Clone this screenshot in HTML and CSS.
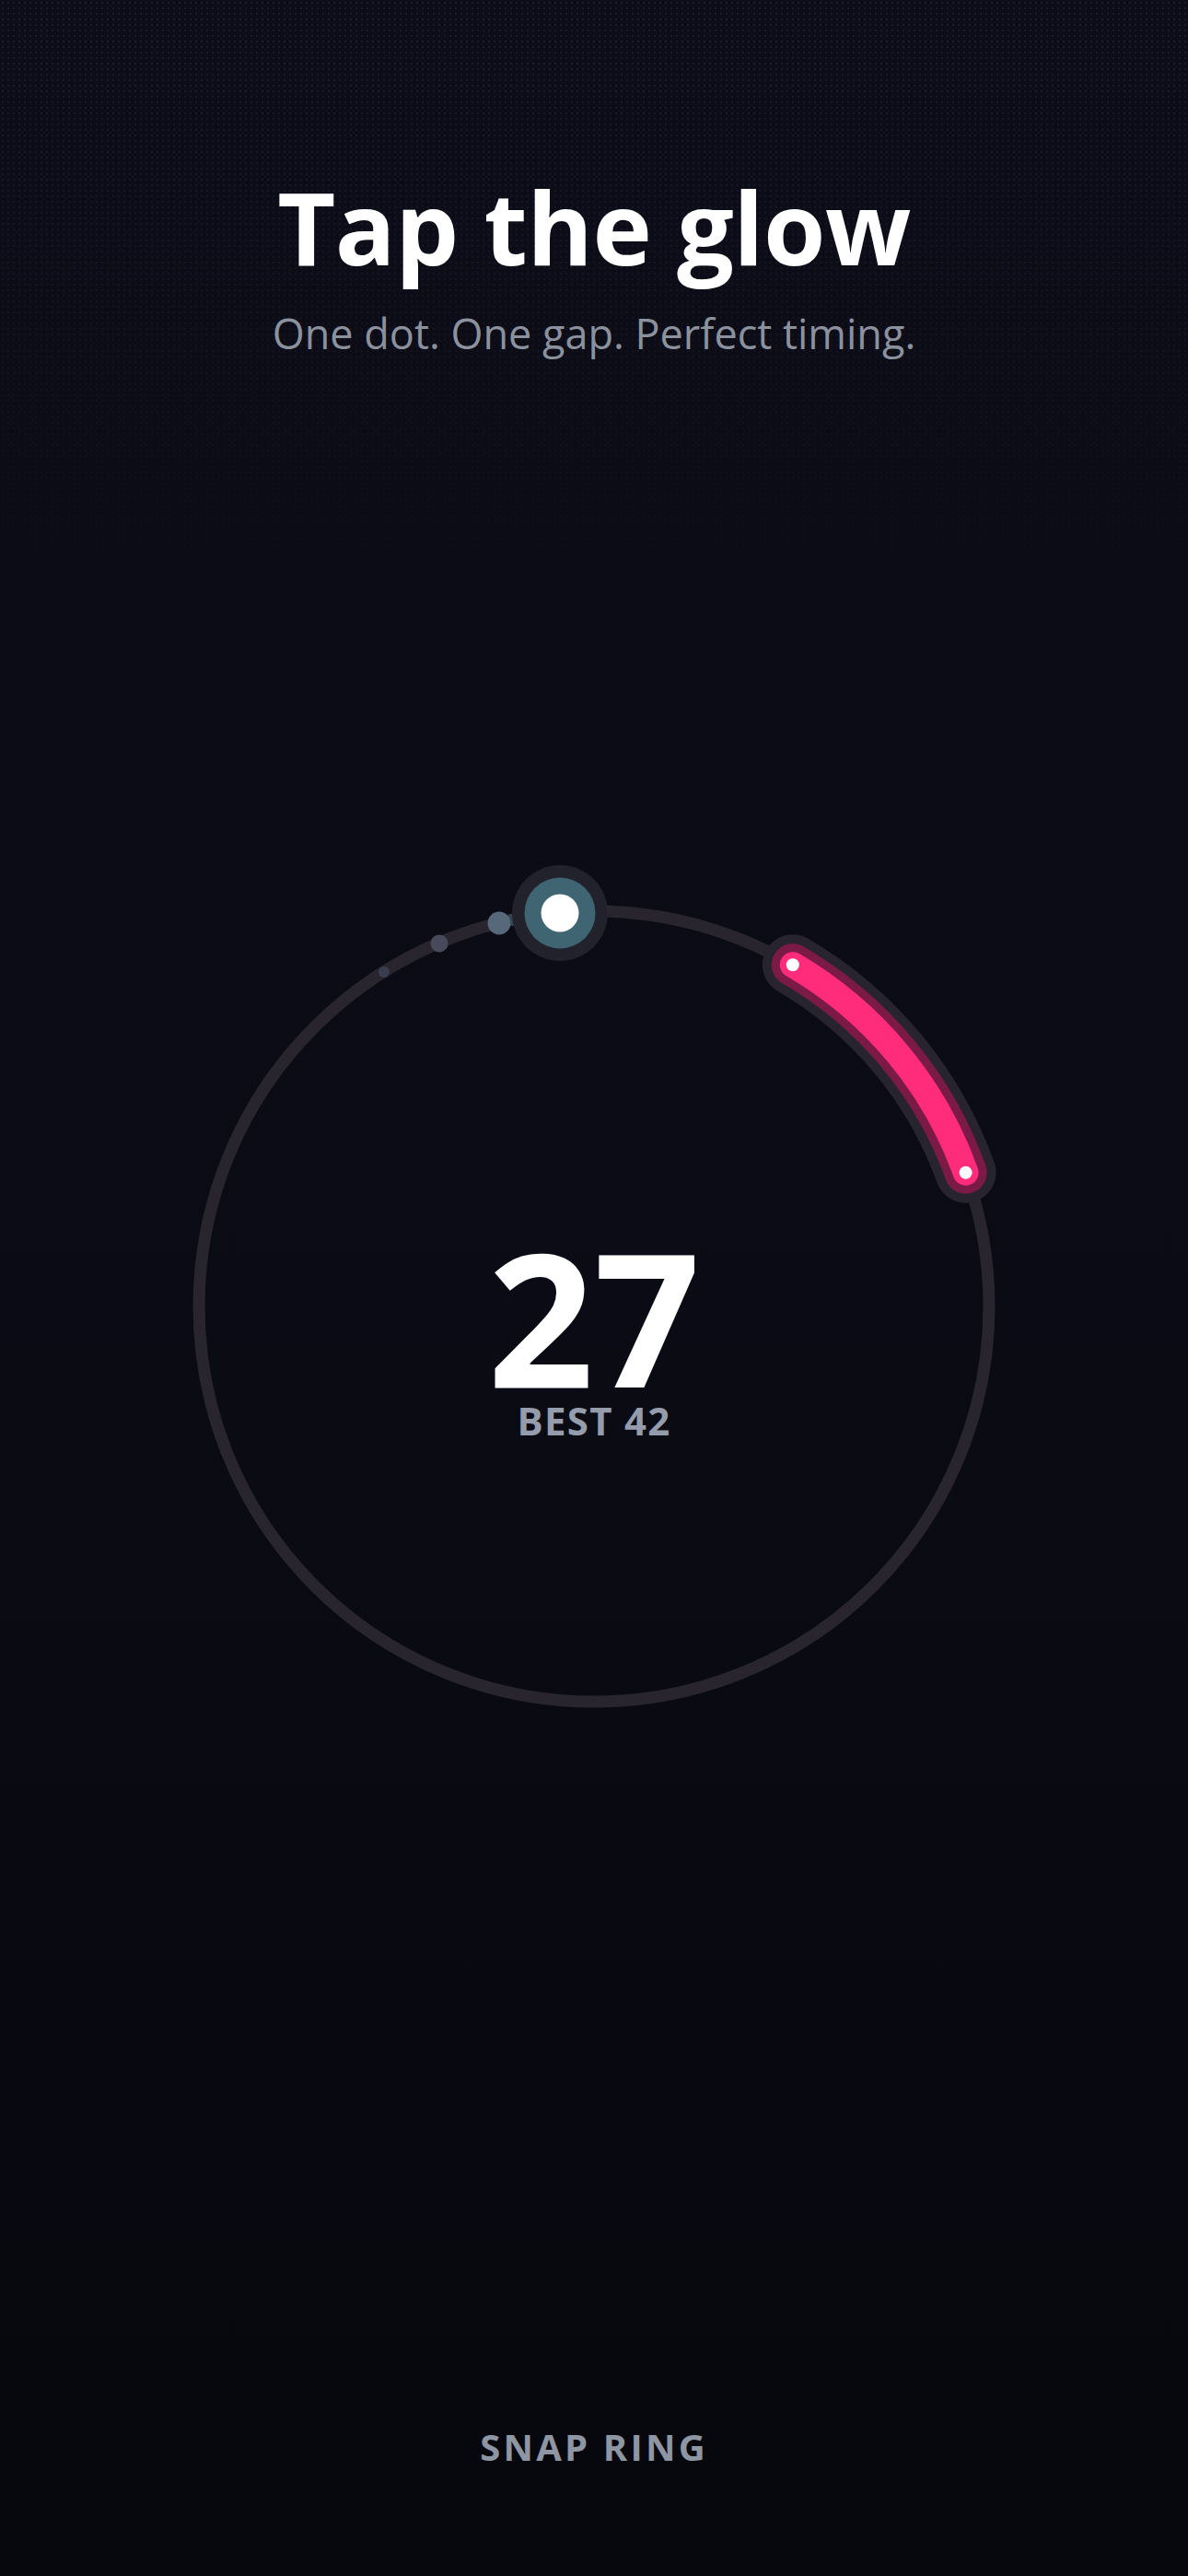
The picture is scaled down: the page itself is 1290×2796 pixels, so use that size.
FILE: index.html
```html
<!DOCTYPE html>
<html lang="en">
<head>
  <meta charset="UTF-8" />
  <meta name="viewport" content="width=device-width, initial-scale=1.0" />
  <title>Snap Ring</title>
  <link rel="stylesheet" href="styles.css">
</head>
<body>
  <main class="screen">
    <header class="intro">
      <h1 class="title">Tap the glow</h1>
      <p class="tagline">One dot. One gap. Perfect timing.</p>
    </header>

    <section class="stage">
      <svg class="ring" viewBox="0 0 1000 1000" width="1000" height="1000" aria-hidden="true">
        <!-- track -->
        <circle cx="500" cy="500" r="429" fill="none" stroke="#29252f" stroke-width="13" />

        <!-- target gap -->
        <path d="M 715.8 129.2 A 429 429 0 0 1 903.6 354.7" fill="none" stroke="#28242f" stroke-width="66" stroke-linecap="round" />
        <path d="M 715.8 129.2 A 429 429 0 0 1 903.6 354.7" fill="none" stroke="#7b1a46" stroke-width="46" stroke-linecap="round" />
        <path d="M 715.8 129.2 A 429 429 0 0 1 903.6 354.7" fill="none" stroke="#ff2c7b" stroke-width="28" stroke-linecap="round" />
        <circle cx="715.8" cy="129.2" r="7" fill="#ffffff" />
        <circle cx="903.6" cy="354.7" r="7" fill="#ffffff" />

        <!-- trail -->
        <path d="M 408 81 A 429 429 0 0 1 515 71.3" fill="none" stroke="#33454f" stroke-width="13" />
        <circle cx="272" cy="137" r="6" fill="#3a3d4e" />
        <circle cx="332" cy="106" r="9.5" fill="#484a5c" />
        <circle cx="397" cy="84" r="12.5" fill="#56687a" />

        <!-- player dot -->
        <circle cx="463" cy="73" r="52" fill="#22222d" />
        <circle cx="463" cy="73" r="38.5" fill="#3e6571" />
        <circle cx="463" cy="73" r="20.5" fill="#ffffff" />
      </svg>

      <div class="score">
        <div class="score-value">27</div>
        <div class="score-best">BEST 42</div>
      </div>
    </section>

    <footer class="brand">SNAP RING</footer>
  </main>
</body>
</html>
```

FILE: styles.css
```css
:root {
  --bg-top: #0c0d18;
  --bg-bottom: #07080d;
  --text: #ffffff;
  --muted: #8b919d;
  --label: #959cab;
}

* { box-sizing: border-box; }

html, body {
  margin: 0;
  font-family: 'Open Sans', 'Noto Sans', sans-serif;
  background: var(--bg-bottom);
  color: var(--text);
}

.screen {
  position: relative;
  display: flex;
  flex-direction: column;
  align-items: center;
  width: 1290px;
  min-height: 2796px;
  padding-bottom: 116px;
  background: linear-gradient(180deg, var(--bg-top) 0%, #0a0b14 50%, var(--bg-bottom) 100%);
  overflow: hidden;
}

/* faint dotted texture near the top */
.screen::before {
  content: "";
  position: absolute;
  top: 0;
  left: 0;
  right: 0;
  height: 700px;
  background-image: radial-gradient(circle, rgba(130, 130, 170, 0.14) 0.9px, transparent 1.4px);
  background-size: 6px 6px;
  -webkit-mask-image: linear-gradient(180deg, #000 0%, transparent 100%);
  mask-image: linear-gradient(180deg, #000 0%, transparent 100%);
  pointer-events: none;
}

.intro {
  position: relative;
  padding-top: 181px;
  text-align: center;
}

.title {
  margin: 0;
  font-size: 109px;
  line-height: 1.2;
  font-weight: 700;
  letter-spacing: -0.5px;
}

.tagline {
  margin: 23px 0 0;
  font-size: 45px;
  line-height: 1.2;
  font-weight: 400;
  color: var(--muted);
}

.stage {
  position: relative;
  display: grid;
  margin-top: 529px;
  width: 1000px;
  height: 1000px;
}

.ring,
.score {
  grid-area: 1 / 1;
}

.ring {
  display: block;
}

.score {
  align-self: start;
  justify-self: center;
  margin-top: 424px;
  text-align: center;
}

.score-value {
  font-size: 202px;
  line-height: 0.85;
  font-weight: 700;
}

.score-best {
  margin-top: 8px;
  font-size: 42px;
  line-height: 1;
  font-weight: 700;
  letter-spacing: 0.03em;
  color: var(--label);
}

.brand {
  margin-top: auto;
  font-size: 40px;
  line-height: 1.2;
  font-weight: 700;
  letter-spacing: 0.08em;
  color: #8e95a3;
}
```
